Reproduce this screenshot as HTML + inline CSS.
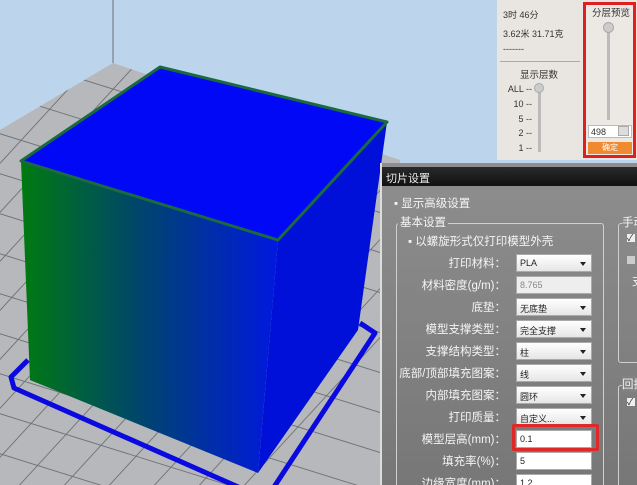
<!DOCTYPE html>
<html><head><meta charset="utf-8"><style>
*{margin:0;padding:0;box-sizing:border-box}
html,body{width:637px;height:485px;overflow:hidden}
body{position:relative;background:#bcd4ec;font-family:"Liberation Sans","Noto Sans CJK SC",sans-serif}
.abs{position:absolute}
.tp{font-size:9px;color:#333}
.dlg{left:380px;top:163px;width:257px;height:322px;background:linear-gradient(#8e8e8e,#777);border-left:2px solid #ddd;overflow:hidden}
.title{left:0;top:4px;width:257px;height:19px;background:linear-gradient(#2a2a2a,#111);color:#eee;font-size:11px;padding:3px 4px}
.lbl{position:absolute;right:131px;width:140px;text-align:right;color:#f4f4f4;font-size:11.5px;white-space:nowrap}
.fld{position:absolute;left:134px;width:76px;height:18px;background:linear-gradient(#fff,#e6e6e6);border:1px solid #aaa;font-size:9px;color:#222;padding:3px 3px}
.fld.dd:after{content:"";position:absolute;right:5px;top:7px;border:3px solid transparent;border-top:4px solid #222}
.txt{background:#fff}
.fs{border:1px solid #d0d0d0;border-radius:3px}
.nw{white-space:nowrap}
</style></head><body>
<svg class="abs" style="left:0;top:0" width="400" height="485" viewBox="0 0 400 485">
<defs>
<clipPath id="fl"><polygon points="0,130 113,63 400,160 400,485 0,485"/></clipPath>
<linearGradient id="fg" x1="0" x2="1" y1="0" y2="0"><stop offset="0" stop-color="#007a10"/><stop offset="0.45" stop-color="#00466a"/><stop offset="1" stop-color="#0018e0"/></linearGradient>
</defs>
<line x1="113" y1="0" x2="113" y2="63" stroke="#7a7f88" stroke-width="1.2"/>
<polygon points="0,130 113,63 400,160 400,485 0,485" fill="#b6b8bb"/>
<g clip-path="url(#fl)" stroke="#6f7275" stroke-width="0.9">
<line x1="-300" y1="40" x2="500" y2="290"/><line x1="-300" y1="80" x2="500" y2="330"/><line x1="-300" y1="120" x2="500" y2="370"/><line x1="-300" y1="160" x2="500" y2="410"/><line x1="-300" y1="200" x2="500" y2="450"/><line x1="-300" y1="240" x2="500" y2="490"/><line x1="-300" y1="280" x2="500" y2="530"/><line x1="-300" y1="320" x2="500" y2="570"/><line x1="-300" y1="360" x2="500" y2="610"/><line x1="-300" y1="0" x2="500" y2="250"/><line x1="-300" y1="-40" x2="500" y2="210"/>
<line x1="150" y1="0" x2="-300" y2="490"/><line x1="195" y1="0" x2="-255" y2="490"/><line x1="240" y1="0" x2="-210" y2="490"/><line x1="285" y1="0" x2="-165" y2="490"/><line x1="330" y1="0" x2="-120" y2="490"/><line x1="375" y1="0" x2="-75" y2="490"/><line x1="420" y1="0" x2="-30" y2="490"/><line x1="465" y1="0" x2="15" y2="490"/><line x1="510" y1="0" x2="60" y2="490"/><line x1="555" y1="0" x2="105" y2="490"/><line x1="600" y1="0" x2="150" y2="490"/><line x1="645" y1="0" x2="195" y2="490"/><line x1="690" y1="0" x2="240" y2="490"/><line x1="105" y1="0" x2="-345" y2="490"/>
</g>
<polyline points="28,360 11,377 14,388 245,490" fill="none" stroke="#0a0ae0" stroke-width="5" stroke-linejoin="round"/>
<polyline points="360,323 375,333 272,490" fill="none" stroke="#0a0ae0" stroke-width="5" stroke-linejoin="round"/>
<polygon points="278,240 387,122 358,330 258,473" fill="#0010d8"/>
<polygon points="21,161 278,240 258,473 30,380" fill="url(#fg)"/>
<polygon points="160,67 387,122 278,240 21,161" fill="#0008f6" stroke="#1a6a40" stroke-width="3" stroke-linejoin="round"/>
</svg>

<div class="abs" style="left:497px;top:0;width:140px;height:160px;background:#e9e6e1"></div>
<div class="abs tp" style="left:503px;top:8px">3时 46分</div>
<div class="abs tp" style="left:503px;top:27px">3.62米 31.71克</div>
<div class="abs tp" style="left:503px;top:44px">-------</div>
<div class="abs" style="left:500px;top:61px;width:80px;border-top:1px solid #aaa"></div>
<div class="abs tp" style="left:520px;top:67px;font-size:9.5px">显示层数</div>
<div class="abs tp" style="left:506px;top:82px;line-height:14.8px;text-align:right;width:26px">ALL --<br>10 --<br>5 --<br>2 --<br>1 --</div>
<div class="abs" style="left:538px;top:86px;width:3px;height:66px;background:#bbb"></div>
<div class="abs" style="left:534px;top:83px;width:10px;height:10px;border-radius:50%;background:#ccc;border:1px solid #aaa"></div>
<div class="abs" style="left:583px;top:2px;width:53px;height:156px;border:3px solid #e02020;background:#ece9e4"></div>
<div class="abs tp" style="left:592px;top:5px;font-size:9.5px">分层预览</div>
<div class="abs" style="left:607px;top:28px;width:3px;height:92px;background:#bbb"></div>
<div class="abs" style="left:603px;top:22px;width:11px;height:11px;border-radius:50%;background:#ccc;border:1px solid #aaa"></div>
<div class="abs tp" style="left:588px;top:125px;width:44px;height:13px;background:#fff;border:1px solid #bbb;padding:1px 2px">498</div>
<div class="abs" style="left:618px;top:126px;width:11px;height:10px;background:#ddd;border:1px solid #aaa"></div>
<div class="abs" style="left:588px;top:142px;width:44px;height:12px;background:#f08a30;color:#fff;font-size:8px;text-align:center">确定</div>

<div class="abs dlg">
<div class="abs title">切片设置</div>
<div class="abs nw" style="left:12px;top:32px;color:#f4f4f4;font-size:11.5px">▪ 显示高级设置</div>
<div class="abs fs" style="left:14px;top:60px;width:208px;height:280px"></div>
<div class="abs nw" style="left:16px;top:51px;color:#f4f4f4;font-size:11.5px;background:#8a8a8a;padding:0 2px">基本设置</div>
<div class="abs nw" style="left:26px;top:70px;color:#f4f4f4;font-size:11.5px">▪ 以螺旋形式仅打印模型外壳</div>
<div class="abs fs" style="left:236px;top:60px;width:40px;height:140px"></div>
<div class="abs nw" style="left:240px;top:51px;color:#f4f4f4;font-size:11.5px;background:#8a8a8a">手动</div>
<div class="abs" style="left:245px;top:71px;color:#222;font-size:9px;width:8px;height:8px;background:#eee;line-height:8px">✓</div>
<div class="abs" style="left:245px;top:93px;width:8px;height:8px;background:#ccc"></div>
<div class="abs nw" style="left:250px;top:110px;color:#f4f4f4;font-size:11.5px">支</div>
<div class="abs fs" style="left:236px;top:222px;width:40px;height:120px"></div>
<div class="abs nw" style="left:240px;top:213px;color:#f4f4f4;font-size:11.5px;background:#828282">回抽</div>
<div class="abs" style="left:245px;top:235px;color:#222;font-size:9px;width:8px;height:8px;background:#eee;line-height:8px">✓</div>

<div class="lbl" style="top:92px">打印材料：</div><div class="fld dd" style="top:91px">PLA</div>
<div class="lbl" style="top:114px">材料密度(g/m)：</div><div class="fld" style="top:113px;background:#eee;color:#888">8.765</div>
<div class="lbl" style="top:136px">底垫：</div><div class="fld dd" style="top:135px">无底垫</div>
<div class="lbl" style="top:158px">模型支撑类型：</div><div class="fld dd" style="top:157px">完全支撑</div>
<div class="lbl" style="top:180px">支撑结构类型：</div><div class="fld dd" style="top:179px">柱</div>
<div class="lbl" style="top:202px">底部/顶部填充图案：</div><div class="fld dd" style="top:201px">线</div>
<div class="lbl" style="top:224px">内部填充图案：</div><div class="fld dd" style="top:223px">圆环</div>
<div class="lbl" style="top:246px">打印质量：</div><div class="fld dd" style="top:245px">自定义...</div>
<div class="lbl" style="top:268px">模型层高(mm)：</div><div class="fld txt" style="top:267px">0.1</div>
<div class="abs" style="left:130px;top:261px;width:87px;height:27px;border:3px solid #e02828;border-radius:2px"></div>
<div class="lbl" style="top:290px">填充率(%)：</div><div class="fld txt" style="top:289px">5</div>
<div class="lbl" style="top:312px">边缘宽度(mm)：</div><div class="fld txt" style="top:311px">1.2</div>
</div>
</body></html>
